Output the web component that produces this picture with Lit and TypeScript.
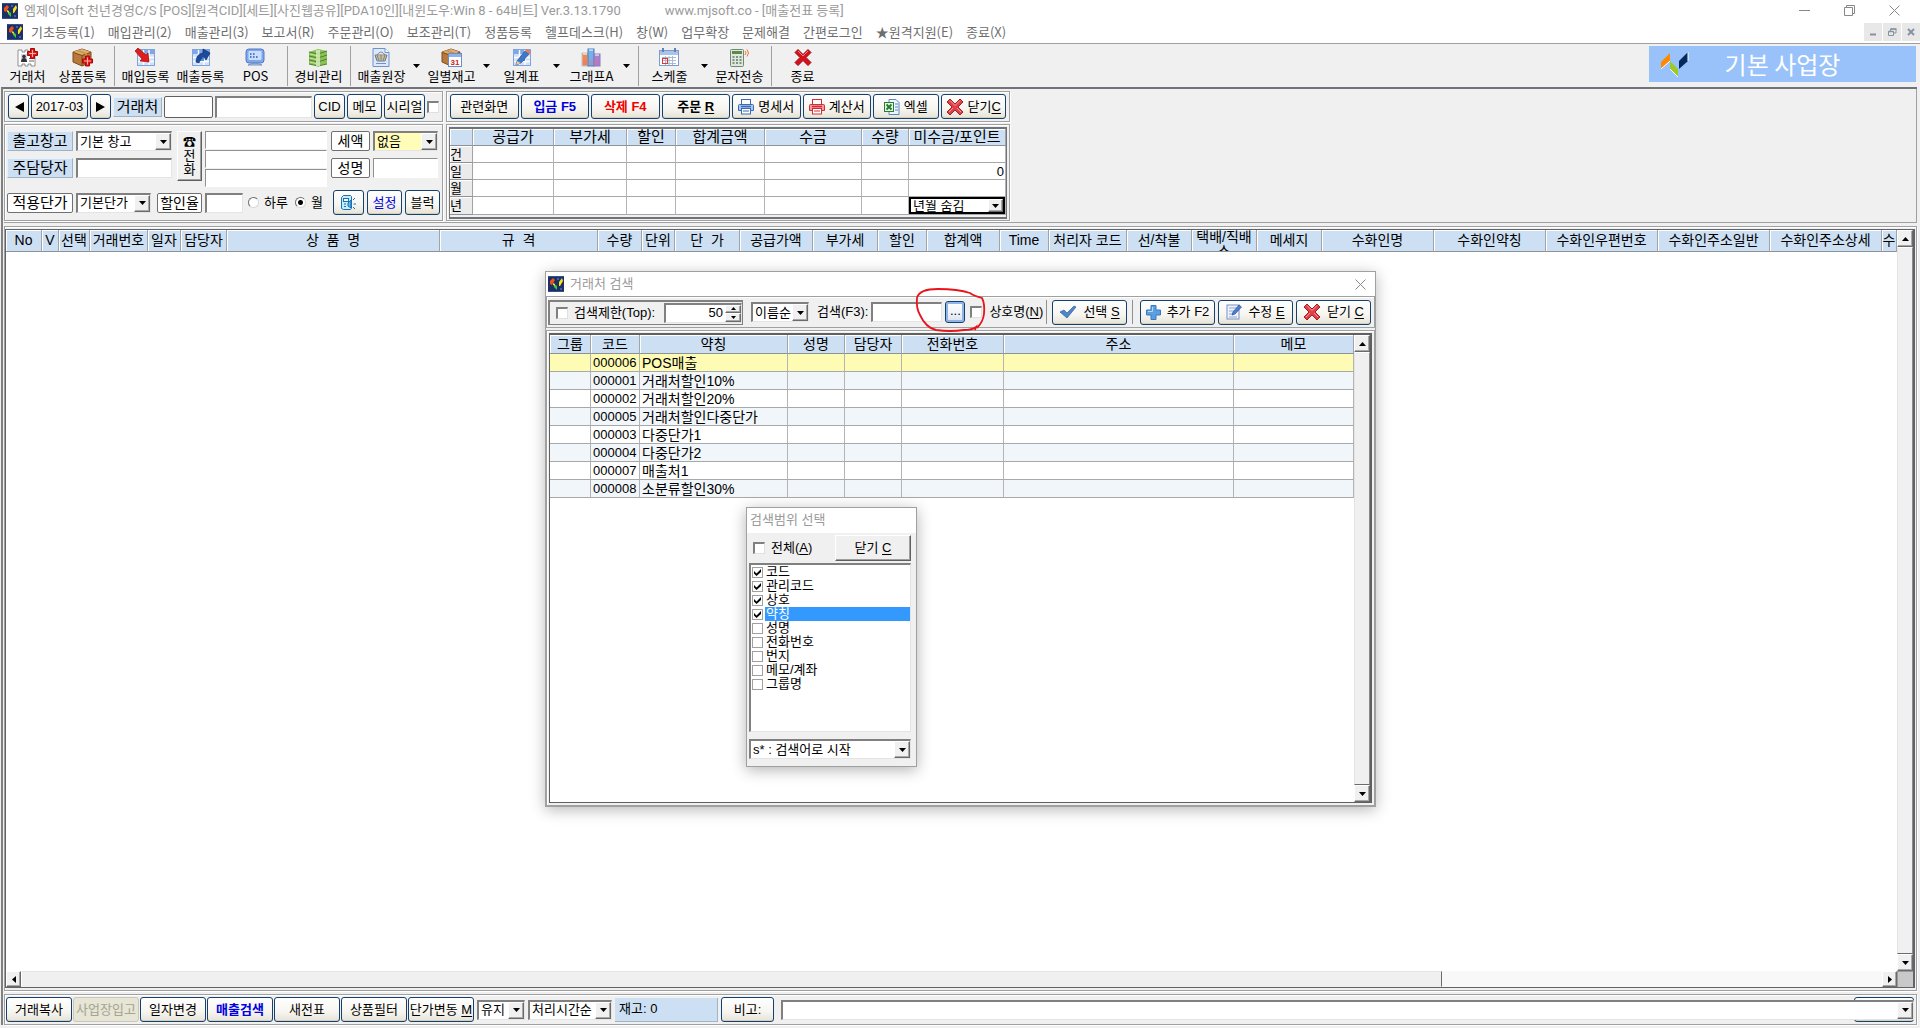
import { LitElement, html, css, svg, nothing } from "lit";
import { customElement } from "lit/decorators.js";
import { classMap } from "lit/directives/class-map.js";

/* ---------- icons ---------- */

const icon = (w: number, h: number, body: unknown) =>
  html`<svg class="icon" width=${w} height=${h} viewBox="0 0 ${w} ${h}" aria-hidden="true">${body}</svg>`;

const redPlus = (x: number, y: number) => svg`<g transform="translate(${x} ${y})">
  <path d="M3 0h4v3h3v4h-3v3h-4v-3h-3v-4h3z" fill="#e01818" stroke="#a80808"/>
  <path d="M5 1.5v7M1.5 5h7" stroke="#ffb0a8"/></g>`;

const sheet = svg`
  <rect x="2.5" y="1.5" width="17" height="16" fill="#cfe0fa" stroke="#7ea3dd"/>
  <rect x="3" y="2" width="16" height="4" fill="#7fa6e6"/>
  <path d="M3 9.500h16M3 13.500h16M8.500 2v15M14 2v15" stroke="#fff" stroke-width="1.4"/>
  <rect x="9" y="10" width="5" height="3" fill="#5f8fe0"/>`;

const crate = svg`
  <path d="M1 4l9-3 9 3v10l-9 4-9-4z" fill="#b87a3c" stroke="#7d4c1c"/>
  <path d="M1 4l9 3 9-3-9-3z" fill="#e0ae72"/>
  <path d="M10 7v11M1.500 4.500l8.500 3 8.500-3" stroke="#7d4c1c" fill="none"/>
  <path d="M4 3l9 3v4l2-1v-4l-9-3z" fill="#c9924f"/>`;

const cross = svg`
  <path d="M4 1l5 5 5-5 3 3-5 5 5 5-3 3-5-5-5 5-3-3 5-5-5-5z" fill="#d8101c" stroke="#9c0810" stroke-linejoin="round"/>
  <path d="M4 2.500l5 5 5-5" stroke="#f4878a" fill="none"/>`;

const printer = (a: string, b: string) => icon(16, 16, svg`
  <rect x="3.500" y="0.500" width="9" height="6" fill="#fff" stroke="${a}"/>
  <path d="M1.500 5.500h13q1 0 1 1v5h-15v-5q0-1 1-1z" fill="${b}" stroke="${a}"/>
  <path d="M3 7.500h10" stroke="${a}" stroke-width="1.500"/>
  <rect x="3.500" y="9.500" width="9" height="5.500" fill="#fff" stroke="${a}"/>
  <path d="M5 12h6" stroke="${a}"/>`);

const icons = {
  client: icon(21, 19, svg`
    <path d="M1 2h4v2h3v-2h3v2h3v-2h4v16h-4v-2h-3v2h-3v-2h-3v2h-4z" fill="#fff" stroke="#777" stroke-width=".8"/>
    <rect x="4" y="6" width="6" height="8" fill="#cfd8e6"/>
    <circle cx="7" cy="8.500" r="1.800" fill="#333"/><path d="M4 14q0-4 3-4t3 4z" fill="#333"/>
    <path d="M12 10.500h5M12 13h5" stroke="#666"/>${redPlus(10.500, 0.500)}`),
  goods: icon(21, 19, svg`${crate}${redPlus(10.500, 8)}`),
  buy: icon(21, 19, svg`${sheet}<path d="M0 3l3-3 8 7 2-2 1 9-9-1 2-2z" fill="#e01c1c" stroke="#a00c0c" stroke-width=".7"/>`),
  sell: icon(21, 19, svg`${sheet}<path d="M6 14q0-8 7-9v-4l7 4-4 7-2-3q-4 1-5 6z" fill="#1c4b9e" stroke="#0c2f70" stroke-width=".7"/>`),
  pos: icon(21, 19, svg`
    <rect x="1" y="1" width="18" height="14" rx="3" fill="#7fa7ee" stroke="#5279c4"/>
    <rect x="3.500" y="3" width="13" height="9" rx="1" fill="#c9ddff"/>
    <path d="M5 6h1.500M8 6h1.500M5 9h1.500M8 9h1.500M11 9h1.500" stroke="#2a55b0" stroke-width="1.500"/>
    <path d="M3 17q7-3.500 14 0z" fill="#b9c9e6" stroke="#7b94c4"/>`),
  cost: icon(21, 19, svg`
    <path d="M1 4l9-3 9 2v13l-9 2-9-2z" fill="#8cc058"/>
    <path d="M1 4l9 2 9-3M1 8l9 2 9-3M1 12l9 2 9-3M1 16l9 2 9-2" stroke="#4b8426" fill="none"/>
    <path d="M8 2h4v16h-4z" fill="#d9efc0" opacity=".8"/>
    <path d="M2 6l6 1.500M2 10l6 1.500M2 14l6 1.500" stroke="#c8e6a0"/>`),
  ledger: icon(21, 19, svg`
    <path d="M2 .5h12l4 4v14h-16z" fill="#dde9fb" stroke="#6d92cf"/>
    <path d="M14 .5v4h4" fill="#fff" stroke="#6d92cf"/>
    <path d="M4 7h12l-2 6h-8z" fill="#f4ecc0" stroke="#777"/>
    <path d="M6 7l2 6M10 7v6M14 7l-2 6M4.500 9h11M5 11h10M6 7q4-6 8 0" stroke="#777" fill="none" stroke-width=".8"/>
    <path d="M5 15.500h10" stroke="#6d92cf"/>`),
  stock: icon(21, 19, svg`${crate}
    <rect x="7.500" y="5.500" width="13" height="13" fill="#fff" stroke="#6a8cc8"/>
    <rect x="8" y="6" width="12" height="3" fill="#8fb0ea"/>
    <text x="14" y="17" font-size="8" font-weight="700" text-anchor="middle" font-family="Liberation Sans" fill="#d02020">31</text>`),
  daily: icon(21, 19, svg`${sheet}<path d="M6 13l8-10 4 3-8 9-5 2z" fill="#3d78cc" stroke="#234e93" stroke-width=".7"/>
    <path d="M6 13l4 2-5 2z" fill="#f0c890"/><path d="M14 3l2-2 4 3-2 2z" fill="#e87c50"/>`),
  chart: icon(21, 19, svg`
    <rect x="1" y="5" width="6" height="13" fill="#f08a50" stroke="#b9c4d8"/>
    <rect x="7" y="1" width="6" height="17" fill="#74b0ea" stroke="#4d7fb8"/>
    <rect x="13" y="6" width="6" height="12" fill="#a982d6" stroke="#8a7ab8"/>
    <path d="M2 6h4M8 2h4M14 7h4" stroke="#fff"/><path d="M2 12h16v5h-16z" fill="#e06a80" opacity=".25"/>`),
  plan: icon(21, 19, svg`
    <rect x=".5" y="2.500" width="19" height="15" fill="#fff" stroke="#7d9cc8"/>
    <rect x="1" y="3" width="18" height="4" fill="#a9c3ea"/>
    <path d="M4 0v4M16 0v4" stroke="#5f82b8" stroke-width="2"/>
    <path d="M3 9.500h14M3 12.500h14M3 15.500h14M6.500 8v9M10 8v9M13.500 8v9" stroke="#a9b9cf"/>
    <rect x="3.500" y="10.500" width="5" height="5" fill="none" stroke="#d83a3a"/>`),
  sms: icon(21, 19, svg`
    <rect x="1.500" y="1.500" width="13" height="17" rx="1" fill="#dfe8da" stroke="#6f8a78"/>
    <rect x="3" y="3" width="10" height="3" fill="#5d8a4c"/>
    <path d="M4.500 8v9M8 8v9M11.500 8v9" stroke="#7d9484" stroke-width="2" stroke-dasharray="2 1"/>
    <path d="M16 3q2 1.500 0 4M18 1.500q3 3.500 0 7" stroke="#e8743c" fill="none"/>`),
  exit: icon(18, 18, cross),
  close: icon(18, 18, svg`
    <path d="M4 1l5 5 5-5 3 3-5 5 5 5-3 3-5-5-5 5-3-3 5-5-5-5z" fill="#e04048" stroke="#a81c24" stroke-linejoin="round"/>
    <path d="M4 2.500l5 5 5-5M3 14l4-4M15 14l-4-4" stroke="#f69a9c" fill="none"/>`),
  printBlue: printer("#3c6ab4", "#a8c8f0"),
  printRed: printer("#cc3038", "#f49a9c"),
  excel: icon(16, 16, svg`
    <path d="M5 .5h7l3 3v12h-10z" fill="#eef4ff" stroke="#5b86c4"/>
    <path d="M11 5h3M11 8h3M11 11h3" stroke="#5b86c4"/>
    <rect x=".5" y="3.500" width="9" height="9" fill="#e4f3e0" stroke="#2b7d35"/>
    <path d="M2.500 5.500l5 5M7.500 5.500l-5 5" stroke="#1d7a2a" stroke-width="1.800"/>`),
  check: icon(18, 14, svg`<path d="M1 7l4-2 3 3 7-7 2 1-9 11z" fill="#4f86c8" stroke="#2e62a4" stroke-width=".7"/>`),
  plus: icon(15, 15, svg`<path d="M5 .5h5v4.500h4.500v5h-4.500v4.500h-5v-4.500h-4.500v-5h4.500z" fill="#5b9fe2" stroke="#3a78bf"/>
    <path d="M6.500 2v4.500h-4.500" stroke="#b8dafa" fill="none"/>`),
  edit: icon(16, 16, svg`
    <rect x="1" y="1" width="12" height="14" fill="#eef3fd" stroke="#7890c0"/>
    <path d="M3 4h8M3 7h5M3 10h4M3 13h8" stroke="#8fa6d0"/>
    <path d="M6 11l1-3 6-7 2.500 2-6.500 7z" fill="#4a80d0" stroke="#2a5090" stroke-width=".7"/>`),
  book: icon(15, 16, svg`
    <path d="M.5 2.500l2-2h7l1 1v12l-1 1h-7l-2-1z" fill="#c4ecff" stroke="#1d6fb0"/>
    <rect x="2.500" y="3.500" width="5" height="3" fill="#fff" stroke="#1d6fb0"/>
    <path d="M3 9h2M3 11.500h2" stroke="#1d6fb0"/>
    <path d="M7 8l3-3v8l-3-2z" fill="#5fb4e8" stroke="#1d6fb0"/>
    <path d="M12 5l2-2M12.500 9h2.500M12 12l2 2" stroke="#1d6fb0"/>`),
  app: icon(16, 16, svg`<rect width="16" height="16" fill="#1c2f66"/>
    <path d="M0 0h16v1h-16zM0 15h16v1h-16z" fill="#34508e"/>
    <path d="M2 5l3-3 2 2-3 5-2-1z" fill="#e8541c"/><path d="M6 8l3 2v4l-3-3z" fill="#3ec83c"/>
    <path d="M5 7l2 1v2l-2-1z" fill="#f8d820"/><path d="M11 6l3-4 1 3-3 5-1 0z" fill="#f8e41c"/>
    <circle cx="10" cy="3" r=".8" fill="#6fa4f0"/><circle cx="13" cy="13" r=".8" fill="#6fa4f0"/>`),
  brand: icon(28, 25, svg`
    <path d="M0 10l9-9v8l-9 8z" fill="#ff8a00"/><path d="M9 9l8 8v8l-8-8z" fill="#9bcb28"/>
    <path d="M18 9l9-9v9l-9 8z" fill="#042a5c"/>
    <path d="M0 17l9-8M9 17l8 8M27 0v9" stroke="#fff" fill="none"/>`),
  min: icon(11, 11, svg`<path d="M0 5.500h11" stroke="#888"/>`),
  restore: icon(11, 11, svg`<path d="M.5 2.500h8v8h-8zM2.500 2.500v-2h8v8h-2" stroke="#888" fill="none"/>`),
  x: icon(11, 11, svg`<path d="M.5 .5l10 10M10.500 .5l-10 10" stroke="#888"/>`),
  mMin: icon(8, 8, svg`<path d="M1 6.500h6" stroke="#8893a0" stroke-width="2"/>`),
  mRestore: icon(9, 8, svg`<path d="M.5 3.500h5v4h-5zM2.500 3v-2h5.500v4h-2" stroke="#8893a0" fill="none"/><path d="M.5 3.500h5M2.500 1h6" stroke="#8893a0" stroke-width="1.500"/>`),
  mX: icon(8, 8, svg`<path d="M1 1l6 6M7 1l-6 6" stroke="#8893a0" stroke-width="2"/>`),
};

const tri = (dir: "up" | "down" | "left" | "right") => {
  const d = { down: "M0 0h7l-3.500 4z", up: "M0 4h7l-3.500-4z", left: "M4 0v7l-4-3.500z", right: "M0 0v7l4-3.500z" }[dir];
  const flat = dir === "up" || dir === "down";
  return html`<svg width=${flat ? 7 : 4} height=${flat ? 4 : 7} viewBox="0 0 ${flat ? 7 : 4} ${flat ? 4 : 7}" aria-hidden="true"><path d=${d}/></svg>`;
};

/* ---------- shared look ---------- */

const base = css`
  * { box-sizing: border-box; }
  svg { display: block; flex: none; }
  button, input, select { font: inherit; color: inherit; margin: 0; padding: 0; border-radius: 0; }
  button { white-space: nowrap; }
  u { text-underline-offset: 2px; }
  .btn {
    display: inline-flex; align-items: center; justify-content: center; gap: 4px;
    height: 25px; border: 1px solid #16406e; border-radius: 3px; overflow: hidden;
    background: linear-gradient(#fff, #f6f5f0 60%, #e6e3d6);
    box-shadow: inset 0 -1px 0 #d3cfbf;
  }
  .btn.blue { color: #0000e0; }
  .btn.red { color: #f00000; }
  .btn.bold { font-weight: 700; }
  .btn:disabled { color: #a5a48f; background: #e6e5d6; border-color: #c9c7ba; box-shadow: none; }
  .sunk, .combo {
    background: #fff; min-width: 0;
    border: solid; border-width: 2px 1px 1px 2px; border-color: #808080 #e4e4e4 #e4e4e4 #808080;
  }
  .combo { display: inline-flex; height: 20px; }
  .combo select {
    appearance: none; border: 0; background: none; flex: 1; min-width: 0;
    padding-left: 2px; outline: 0; line-height: 16px;
  }
  .drop, .sb-btn {
    display: flex; align-items: center; justify-content: center; flex: none; width: 16px;
    background: #f0f0f0; border: 1px solid; border-color: #fff #6b6b6b #6b6b6b #fff;
    box-shadow: inset -1px -1px 0 #a8a8a8;
  }
  input[type="checkbox"] {
    appearance: none; width: 12px; height: 12px; flex: none; background: #fff;
    border: solid; border-width: 2px 1px 1px 2px; border-color: #808080 #e0e0e0 #e0e0e0 #808080;
  }
  .vbar { display: flex; flex-direction: column; width: 16px; flex: none; background: #f0f0f0; }
  .vbar .sb-btn { height: 17px; width: 16px; }
  .vbar .thumb { flex: 1; border: solid; border-width: 1px; border-color: #fff #8a8a8a #6b6b6b #e4e4e4; }
  table { border-collapse: separate; border-spacing: 0; table-layout: fixed; width: 100%; }
  th {
    font-weight: 400; background: #cde0f3; padding: 0; white-space: nowrap; overflow: hidden;
    border-right: 1px solid #a0a4a8; border-bottom: 1px solid #8c9298;
    box-shadow: inset 1px 1px 0 #fff;
  }
`;

const combo = (label: string, value: string, cls = "") => html`
  <span class="combo ${cls}"><select aria-label=${label}><option>${value}</option></select><span class="drop">${tri("down")}</span></span>`;

const vbar = () => html`<div class="vbar">
  <button class="sb-btn" aria-label="위로">${tri("up")}</button><div class="thumb"></div>
  <button class="sb-btn" aria-label="아래로">${tri("down")}</button></div>`;

/* ---------- customer search window ---------- */

const customers = [
  ["000006", "POS매출"], ["000001", "거래처할인10%"], ["000002", "거래처할인20%"],
  ["000005", "거래처할인다중단가"], ["000003", "다중단가1"], ["000004", "다중단가2"],
  ["000007", "매출처1"], ["000008", "소분류할인30%"],
];
const customerCols: [string, number | null][] = [
  ["그룹", 41], ["코드", 49], ["약칭", 148], ["성명", 57], ["담당자", 57], ["전화번호", 102], ["주소", 230], ["메모", null],
];

@customElement("customer-search")
export class CustomerSearch extends LitElement {
  static styles = [base, css`
    :host { display: flex; flex-direction: column; background: #f0f0f0; border: 1px solid #a0a0a0; box-shadow: 0 3px 14px rgba(0, 0, 0, .28); }
    .title { display: flex; align-items: center; gap: 6px; height: 24px; padding: 0 9px 0 2px; background: #fff; color: #9a9a9a; }
    .title span { flex: 1; }
    .title button { border: 0; background: none; }
    .tools { display: flex; align-items: center; height: 32px; padding: 0 3px 0 1px; border: 1px solid #a0a0a0; box-shadow: inset 1px 1px 0 #fff; }
    .limit { display: flex; align-items: center; width: 195px; height: 25px; padding-left: 6px; border: 1px solid #808080; border-width: 2px 1px 1px 2px; }
    .limit label { flex: 1; padding-left: 6px; white-space: nowrap; }
    .spin { display: flex; width: 78px; height: 20px; flex: none; }
    .spin input { flex: 1; min-width: 0; border: 0; text-align: right; background: none; outline: 0; padding-right: 2px; }
    .steps { display: flex; flex-direction: column; width: 16px; flex: none; }
    .steps .sb-btn { flex: 1; height: 8px; width: 16px; }
    .steps svg { width: 5px; height: 3px; }
    .order { width: 58px; margin: 0 8px; }
    .key { width: 71px; height: 20px; margin: 0 3px; }
    .dots { width: 20px; height: 22px; padding-bottom: 3px; border-radius: 3px; margin-right: 5px; background: linear-gradient(#fff, #eef2fa 60%, #d5dff0); box-shadow: inset 0 0 0 2px #8fb4ea; }
    .name { padding-left: 7px; flex: 1; }
    .sep { width: 1px; height: 24px; background: #909090; margin-right: 5px; }
    .sep.wide { margin: 0 7px 0 5px; }
    .act { width: 75px; gap: 6px; }
    .act + .act { margin-left: 3px; }
    .frame { flex: 1; display: flex; margin-top: 2px; padding: 2px; border: 1px solid #a0a0a0; box-shadow: inset 1px 1px 0 #fff; }
    .list { flex: 1; display: flex; background: #fff; border: 1px solid #606060; border-width: 2px 2px 1px 1px; font-size: 14px; }
    .body { flex: 1; min-width: 0; }
    th { height: 19px; line-height: 18px; }
    td { height: 18px; line-height: 16px; padding: 0 0 0 2px; white-space: nowrap; border-right: 1px solid #b4b4b4; border-bottom: 1px solid #a8a8a8; }
    .code { font-size: 13px; }
    tr.even td { background: #f1f6fa; }
    tr.current td { background: #fdfbb4; }
  `];
  render() {
    return html`
      <div class="title">${icons.app}<span>거래처 검색</span><button aria-label="닫기">${icons.x}</button></div>
      <div class="tools">
        <div class="limit">
          <input type="checkbox" id="lim"><label for="lim">검색제한(Top):</label>
          <span class="spin sunk"><input type="text" aria-label="검색제한" value="50">
            <span class="steps"><button class="sb-btn" aria-label="증가">${tri("up")}</button><button class="sb-btn" aria-label="감소">${tri("down")}</button></span></span>
        </div>
        ${combo("정렬", "이름순", "order")}
        <label for="key">검색(F3):</label><input type="text" id="key" class="sunk key">
        <button class="btn dots">...</button>
        <input type="checkbox" id="nm"><label class="name" for="nm">상호명(<u>N</u>)</label>
        <span class="sep"></span>
        <button class="btn act">${icons.check}<span>선택 <u>S</u></span></button>
        <span class="sep wide"></span>
        <button class="btn act">${icons.plus}<span>추가 F2</span></button>
        <button class="btn act">${icons.edit}<span>수정 <u>E</u></span></button>
        <button class="btn act">${icons.close}<span>닫기 <u>C</u></span></button>
      </div>
      <div class="frame"><div class="list">
        <div class="body"><table>
          <colgroup>${customerCols.map(([, w]) => html`<col width=${w ?? nothing}>`)}</colgroup>
          <thead><tr>${customerCols.map(([t]) => html`<th>${t}</th>`)}</tr></thead>
          <tbody>${customers.map(([code, name], i) => html`
            <tr class=${classMap({ current: i === 0, even: i % 2 === 1 })}>
              <td></td><td class="code">${code}</td><td>${name}</td><td></td><td></td><td></td><td></td><td></td></tr>`)}
          </tbody></table></div>
        ${vbar()}
      </div></div>`;
  }
}

/* ---------- search scope window ---------- */

@customElement("search-scope")
export class SearchScope extends LitElement {
  static styles = [base, css`
    :host { display: flex; flex-direction: column; background: #f0f0f0; border: 1px solid #a0a0a0; box-shadow: 0 3px 14px rgba(0, 0, 0, .3); }
    .title { height: 25px; line-height: 23px; padding-left: 3px; background: #fff; color: #9a9a9a; }
    .head { display: flex; align-items: center; height: 30px; padding: 0 5px 0 6px; }
    .head label { flex: 1; padding-left: 6px; }
    .flat { width: 76px; height: 26px; background: #f0f0f0; border: 1px solid; border-color: #fff #606060 #606060 #fff; box-shadow: inset -1px -1px 0 #a0a0a0; }
    ul { list-style: none; margin: 0 5px 0 2px; padding: 0; flex: 1; }
    li { display: flex; align-items: center; height: 14px; gap: 2px; padding-left: 1px; }
    li label { flex: 1; line-height: 13px; height: 14px; padding-left: 1px; }
    li.on label { background: #3399ff; color: #fff; }
    li .tick { display: grid; width: 11px; height: 11px; }
    li input[type="checkbox"] { grid-area: 1 / 1; width: 11px; height: 11px; border: 1px solid #a0a0a0; }
    li svg { grid-area: 1 / 1; align-self: center; justify-self: center; pointer-events: none; }
    .mode { margin: 7px 5px 7px 2px; height: 20px; }
  `];
  render() {
    const items = ["코드", "관리코드", "상호", "약칭", "성명", "전화번호", "번지", "메모/계좌", "그룹명"];
    return html`
      <div class="title">검색범위 선택</div>
      <div class="head"><input type="checkbox" id="all"><label for="all">전체(<u>A</u>)</label><button class="flat">닫기 <u>C</u></button></div>
      <ul class="sunk">${items.map((t, i) => html`<li class=${classMap({ on: i === 3 })}>
        <span class="tick"><input type="checkbox" id="s${i}" ?checked=${i < 4}>${i < 4 ? icon(7, 7, svg`<path d="M0 2l2.500 2.500 4.500-4.500v3l-4.500 4-2.500-2.500z"/>`) : nothing}</span>
        <label for="s${i}">${t}</label></li>`)}</ul>
      ${combo("검색 방식", "s* : 검색어로 시작", "mode")}`;
  }
}

/* ---------- main window ---------- */

const menus = ["기초등록(1)", "매입관리(2)", "매출관리(3)", "보고서(R)", "주문관리(O)", "보조관리(T)", "정품등록", "헬프데스크(H)",
  "창(W)", "업무확장", "문제해결", "간편로그인", "★원격지원(E)", "종료(X)"];

const tools: (null | [string, unknown, boolean?])[] = [
  ["거래처", icons.client], ["상품등록", icons.goods], null,
  ["매입등록", icons.buy], ["매출등록", icons.sell], ["POS", icons.pos], null,
  ["경비관리", icons.cost], null,
  ["매출원장", icons.ledger, true], ["일별재고", icons.stock, true], ["일계표", icons.daily, true], ["그래프A", icons.chart, true], null,
  ["스케줄", icons.plan, true], ["문자전송", icons.sms], null, ["종료", icons.exit],
];

const columns: [string, number | null][] = [
  ["No", 36], ["V", 17], ["선택", 31], ["거래번호", 58], ["일자", 33], ["담당자", 46], ["상  품  명", 213], ["규  격", 158],
  ["수량", 44], ["단위", 33], ["단  가", 65], ["공급가액", 73], ["부가세", 65], ["할인", 49], ["합계액", 73], ["Time", 49],
  ["처리자 코드", 78], ["선/착불", 65], ["택배/직배 소", 65], ["메세지", 65], ["수화인명", 112], ["수화인약칭", 112],
  ["수화인우편번호", 112], ["수화인주소일반", 112], ["수화인주소상세", 112], ["수", null],
];

const sums: [string, number][] = [["", 23], ["공급가", 81], ["부가세", 73], ["할인", 49], ["합계금액", 89], ["수금", 97], ["수량", 47], ["미수금/포인트", 97]];

@customElement("app-root")
export class AppRoot extends LitElement {
  static styles = [base, css`
    :host {
      display: flex; flex-direction: column; min-height: 100vh; position: relative; overflow: hidden;
      background: #f0f0f0; color: #000; font: 13px/16px "Liberation Sans", "Noto Sans CJK KR", sans-serif;
    }
    .menubar, .toolbar { font-family: "Noto Sans CJK KR", sans-serif; }
    .titlebar { display: flex; align-items: center; height: 21px; padding: 0 20px 0 2px; gap: 6px; background: #fff; color: #9a9a9a; font-family: Roboto, "Noto Sans CJK KR", sans-serif; }
    .titlebar .site { margin-left: 38px; flex: 1; }
    .win { display: flex; gap: 34px; }
    .win button { border: 0; background: none; }
    .menubar { display: flex; align-items: center; height: 23px; padding-left: 7px; background: #fff; border-bottom: 1px solid #a0a0a0; color: #6e6e6e; }
    .menubar nav { display: flex; flex: 1; gap: 13px; padding-left: 8px; }
    .menubar a { color: inherit; text-decoration: none; white-space: nowrap; }
    .mdi { display: flex; gap: 1px; }
    .mdi button { display: grid; place-items: center; width: 18px; height: 18px; border: 0; background: #e8e8e8; }
    .toolbar { display: flex; height: 43px; }
    .tool { display: flex; flex-direction: column; align-items: center; width: 55px; padding: 4px 0 0; gap: 1px; border: 0; background: none; }
    .tool .icon { margin: 0 auto; height: 19px; }
    .more { width: 15px; padding: 0; border: 0; background: none; display: grid; place-items: center; }
    .sep { width: 8px; display: flex; justify-content: center; padding: 2px 0 1px; }
    .sep::before { content: ""; width: 1px; background: #a0a0a0; }
    .brand { display: flex; align-items: center; width: 267px; height: 36px; margin: 2px 4px 0 auto; padding-left: 12px; background: #99c2fa; color: #fff; font-size: 24px; }
    .brand span { flex: 1; text-align: center; padding-right: 40px; }
    .work { flex: 1; display: flex; flex-direction: column; gap: 3px; margin: 0 3px 3px 1px; border-top: 2px solid #707478; border-left: 2px solid #808080; padding-left: 1px; }
    .box { border: 1px solid #a0a0a0; box-shadow: inset 1px 1px 0 #fff, 1px 1px 0 #fff; }
    .forms { display: flex; gap: 3px; padding: 2px 0 1px; border: 1px solid #a0a0a0; border-width: 0 1px 1px 0; }
    .col { display: flex; flex-direction: column; gap: 2px; }
    .left { width: 439px; }
    .right { width: 564px; }
    .row { display: flex; align-items: center; height: 31px; padding: 0 3px; gap: 2px; }
    .tag { display: flex; align-items: center; justify-content: center; height: 20px; background: #cde0f3; font-size: 15px; border: 1px solid; border-color: #e8f1fa #9fb2c4 #9fb2c4 #e8f1fa; white-space: nowrap; }
    .tag.line { background: #fff; border: 1px solid #707070; border-radius: 2px; }
    .tag.mid { font-size: 14px; }
    .nav { width: 21px; } .month { width: 57px; }
    .w49 { width: 49px; } .grow { flex: 1; }
    .round { border: 1px solid #606060; border-radius: 2px; background: #fff; height: 22px; }
    .h22 { height: 22px; }
    .detail { height: 97px; padding: 6px 2px 0; }
    .upper { display: flex; height: 50px; }
    .pair { display: grid; grid-template-columns: 66px 96px; gap: 7px 3px; grid-template-rows: 20px 20px; }
    .pair.tax { grid-template-columns: 39px 65px; }
    .phone { width: 25px; height: 50px; margin: 0 3px 0 5px; padding: 0 4px; line-height: 14px; white-space: normal; background: #f0f0f0; border: 1px solid; border-color: #fff #606060 #606060 #fff; box-shadow: inset -1px -1px 0 #a0a0a0; }
    .tels { display: grid; gap: 1px; width: 122px; margin-right: 4px; }
    .sunk1 { border: 1px solid; border-color: #909090 #fff #fff #909090; background: #fff; min-width: 0; width: 100%; }
    .yellow { background: #fffdb8; }
    .lower { display: flex; align-items: center; height: 25px; margin-top: 9px; gap: 3px; }
    .price { width: 66px; }
    .ratio { width: 45px; }
    .unit { width: 75px; margin-right: 3px; }
    .rate { width: 38px; height: 20px; }
    .radios { display: flex; flex: 1; align-items: center; justify-content: space-between; padding: 0 5px 0 2px; }
    .radios input { appearance: none; width: 11px; height: 11px; border-radius: 50%; background: #fff; border: 1px solid; border-color: #707070 #d8d8d8 #d8d8d8 #707070; }
    .radios input:checked { background: radial-gradient(#000 0 2px, #fff 3px); }
    .radios label { padding-right: 2px; }
    .w31 { width: 31px; } .w35 { width: 35px; }
    .row .w67, .row .w69 { flex: 1 1 69px; } .row .w67 { flex-basis: 66px; }
    .serial { width: 41px; }
    .sumbox { height: 97px; padding: 2px 2px 0; }
    .sum { height: 92px; border: 2px solid #707478; border-width: 2px 1px 2px 1px; background: #f0f0f0; }
    .sum th { height: 17px; line-height: 16px; font-size: 15px; }
    .sum tbody th { background: #ebebeb; font-size: 13px; line-height: 15px; text-align: left; }
    .sum td { height: 17px; padding: 0 1px; background: #fff; text-align: right; line-height: 15px; border-right: 1px solid #b4b4b4; border-bottom: 1px solid #a8a8a8; }
    .sum td.pick { padding: 0; }
    .hide { display: flex; width: 100%; height: 17px; border: 2px solid #000; }
    .hide select { line-height: 12px; }
    .hide .drop { width: 15px; }
    .gridbox { flex: 1; display: flex; flex-direction: column; padding: 2px 1px 2px 0; }
    .grid { flex: 1; display: flex; flex-direction: column; border: 1px solid #606468; border-right-width: 2px; background: #fff; }
    .area { flex: 1; display: flex; min-height: 0; }
    .area .cells { flex: 1; min-width: 0; }
    .cells th { height: 22px; font-size: 14px; white-space: pre; }
    .cells .cut { height: 21px; overflow: hidden; line-height: 20px; }
    .cells .two { white-space: normal; line-height: 14px; }
    .hbar { display: flex; height: 16px; background: #f8f8f8; }
    .hbar .sb-btn { height: 16px; width: 15px; }
    .hthumb { flex: 142; background: #f0f0f0; border: 1px solid; border-color: #e4e4e4 #6b6b6b #f0f0f0 #fff; }
    .track { flex: 44; }
    .corner { width: 16px; background: #c8c8c8; border: 1px solid #999; border-width: 1px 0 0 1px; }
    .foot { display: flex; align-items: center; height: 31px; padding: 0 2px 0 1px; gap: 1px; }
    .foot > .btn { width: 66px; }
    .foot > .note { width: 53px; }
    .keep { width: 48px; margin: 0 2px; } .time { width: 84px; margin-right: 2px; }
    .left-over { width: 103px; height: 24px; padding: 3px 4px; margin-right: 2px; background: #cde0f3; border-bottom: 1px solid #a0b4c8; border-right: 1px solid #a0b4c8; }
    .memo-cell { flex: 1; display: grid; align-items: center; margin-left: 6px; }
    .memo-cell > * { grid-area: 1 / 1; }
    .memo-cell .btn { width: 60px; justify-self: end; }
    .search { position: absolute; left: 545px; top: 271px; width: 831px; height: 536px; }
    .scope { position: absolute; left: 746px; top: 507px; width: 171px; height: 260px; }
    .mark { position: absolute; left: 914px; top: 286px; pointer-events: none; }
  `];

  render() {
    return html`
      <header class="titlebar">${icons.app}
        <span>엠제이Soft 천년경영C/S [POS][원격CID][세트][사진웹공유][PDA10인][내윈도우:Win 8 - 64비트] Ver.3.13.1790</span>
        <span class="site">www.mjsoft.co - [매출전표 등록]</span>
        <span class="win"><button aria-label="최소화">${icons.min}</button><button aria-label="이전 크기로">${icons.restore}</button><button aria-label="닫기">${icons.x}</button></span>
      </header>
      <div class="menubar">${icons.app}<nav>${menus.map((m) => html`<a href="#">${m}</a>`)}</nav>
        <span class="mdi"><button aria-label="창 최소화">${icons.mMin}</button><button aria-label="창 복원">${icons.mRestore}</button><button aria-label="창 닫기">${icons.mX}</button></span>
      </div>
      <div class="toolbar">
        ${tools.map((t) => t === null ? html`<span class="sep"></span>` : html`
          <button class="tool">${t[1]}<span>${t[0]}</span></button>${t[2] ? html`<button class="more" aria-label="${t[0]} 메뉴">${tri("down")}</button>` : nothing}`)}
        <div class="brand">${icons.brand}<span>기본 사업장</span></div>
      </div>
      <main class="work">
        <section class="forms">
          <div class="col left">${this.period()}${this.detail()}</div>
          <div class="col right">${this.actions()}${this.summary()}</div>
        </section>
        ${this.grid()}
        ${this.footer()}
      </main>
      <customer-search class="search"></customer-search>
      <search-scope class="scope"></search-scope>
      <svg class="mark" width="74" height="50" viewBox="0 0 74 50" aria-hidden="true">
        <path d="M63 42q6-6 7-14 1-10-2-16-8-2-12-5-12-4-32-4-19 0-21 9-1 10 3 17 6 13 16 15 14 2 28 0 8 0 12-3l-1 3" fill="none" stroke="#e8141c" stroke-width="1.800"/></svg>`;
  }

  period() {
    return html`<div class="box row">
      <button class="btn nav" aria-label="이전 달">${icon(10, 10, svg`<path d="M10 0v10l-9-5z"/>`)}</button>
      <button class="btn month">2017-03</button>
      <button class="btn nav" aria-label="다음 달">${icon(10, 10, svg`<path d="M0 0v10l9-5z"/>`)}</button>
      <label class="tag w49" for="cust">거래처</label>
      <input type="text" id="cust" class="round w49">
      <input type="text" class="sunk h22 grow" aria-label="거래처명">
      <button class="btn w31">CID</button><button class="btn w35">메모</button><button class="btn serial">시리얼</button>
      <input type="checkbox" aria-label="시리얼 사용">
    </div>`;
  }

  detail() {
    return html`<div class="box detail">
      <div class="upper">
        <div class="pair">
          <span class="tag">출고창고</span>${combo("출고창고", "기본 창고")}
          <label class="tag" for="mgr">주담당자</label><input type="text" id="mgr" class="sunk">
        </div>
        <button class="phone">☎전화</button>
        <div class="tels"><input type="text" class="sunk1" aria-label="전화 1"><input type="text" class="sunk1" aria-label="전화 2"><input type="text" class="sunk1" aria-label="전화 3"></div>
        <div class="pair tax">
          <span class="tag line mid">세액</span>${combo("세액", "없음", "yellow")}
          <label class="tag line mid" for="nm">성명</label><input type="text" id="nm" class="sunk1">
        </div>
      </div>
      <div class="lower">
        <span class="tag line price">적용단가</span>${combo("적용단가", "기본단가", "unit")}
        <label class="tag line mid ratio" for="rt">할인율</label><input type="text" id="rt" class="sunk rate">
        <span class="radios"><input type="radio" name="p" id="d"><label for="d">하루</label><input type="radio" name="p" id="m" checked><label for="m">월</label></span>
        <button class="btn w31" aria-label="주소록">${icons.book}</button>
        <button class="btn w35 blue">설정</button><button class="btn w35">블럭</button>
      </div>
    </div>`;
  }

  actions() {
    return html`<div class="box row">
      <button class="btn w69">관련화면</button><button class="btn w69 bold blue">입금 F5</button><button class="btn w69 bold red">삭제 F4</button>
      <button class="btn w69"><b>주문 <u>R</u></b></button><button class="btn w69">${icons.printBlue}명세서</button><button class="btn w69">${icons.printRed}계산서</button>
      <button class="btn w67">${icons.excel}엑셀</button><button class="btn w67">${icons.close}<span>닫기<u>C</u></span></button>
    </div>`;
  }

  summary() {
    const blanks = [0, 1, 2, 3, 4, 5];
    return html`<div class="box sumbox"><div class="sum"><table>
      <colgroup>${sums.map(([, w]) => html`<col width=${w}>`)}</colgroup>
      <thead><tr>${sums.map(([t]) => html`<th>${t}</th>`)}</tr></thead>
      <tbody>${["건", "일", "월", "년"].map((r) => html`<tr><th>${r}</th>${blanks.map(() => html`<td></td>`)}
        ${r === "년" ? html`<td class="pick">${combo("표시", "년월 숨김", "hide")}</td>` : html`<td>${r === "일" ? "0" : ""}</td>`}</tr>`)}</tbody>
    </table></div></div>`;
  }

  grid() {
    return html`<section class="box gridbox"><div class="grid">
      <div class="area"><div class="cells"><table>
        <colgroup>${columns.map(([, w]) => html`<col width=${w ?? nothing}>`)}</colgroup>
        <thead><tr>${columns.map(([t]) => html`<th><div class="cut ${t.startsWith("택배") ? "two" : ""}">${t}</div></th>`)}</tr></thead>
      </table></div>${vbar()}</div>
      <div class="hbar"><button class="sb-btn" aria-label="왼쪽">${tri("left")}</button><div class="hthumb"></div><div class="track"></div>
        <button class="sb-btn" aria-label="오른쪽">${tri("right")}</button><div class="corner"></div></div>
    </div></section>`;
  }

  footer() {
    return html`<footer class="box foot">
      <button class="btn">거래복사</button><button class="btn" disabled>사업장입고</button><button class="btn">일자변경</button>
      <button class="btn bold blue">매출검색</button><button class="btn">새전표</button><button class="btn">상품필터</button>
      <button class="btn"><span>단가변동 <u>M</u></span></button>
      ${combo("유지", "유지", "keep")}${combo("정렬", "처리시간순", "time")}
      <span class="left-over">재고: 0</span>
      <button class="btn note">비고:</button>
      <div class="memo-cell"><button class="btn" aria-label="비고 저장"></button>${combo("비고", "")}</div>
    </footer>`;
  }
}
